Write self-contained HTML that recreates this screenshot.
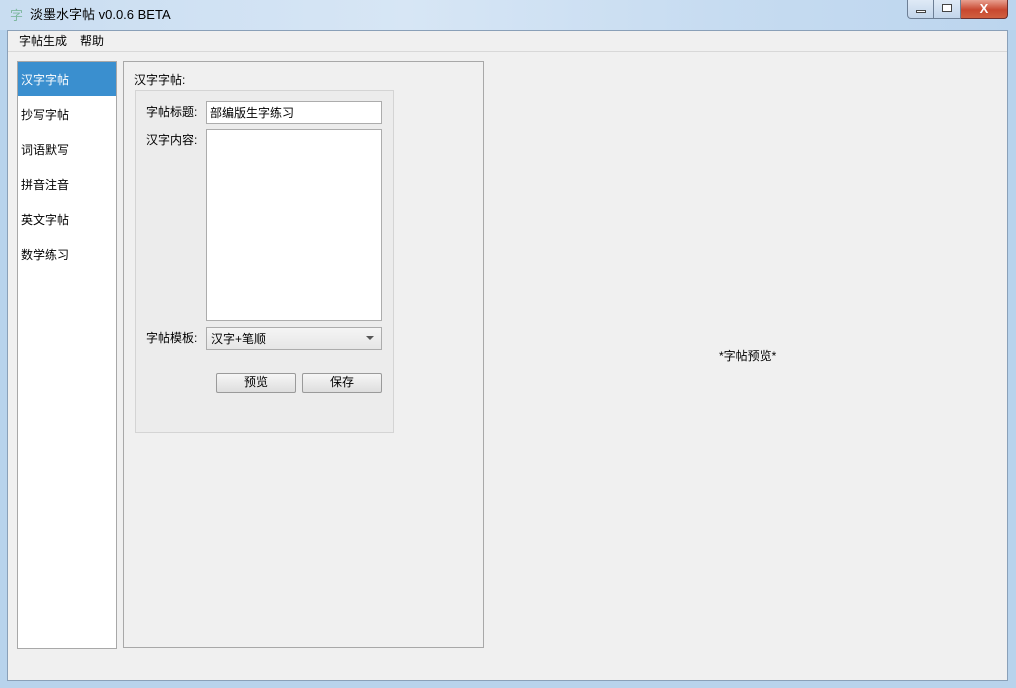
<!DOCTYPE html><html><head><meta charset="utf-8"><style>
body{margin:0;width:1016px;height:688px;overflow:hidden;font:12px "Liberation Sans","Noto Sans CJK SC",sans-serif;color:#000;background:#b8d3ec;position:relative}
.a{position:absolute;box-sizing:border-box}
</style></head><body>
<div class="a" style="left:0;top:0;width:1016px;height:30px;background:linear-gradient(90deg,#c9ddf1,#d7e6f5 40%,#c7dcf1 70%,#bcd5ee)"></div>
<div class="a" style="left:10px;top:5px;color:#7fb8a0;font-size:13px">字</div>
<div class="a" style="left:30px;top:4px;font-size:13px">淡墨水字帖 v0.0.6 BETA</div>
<div class="a" style="left:907px;top:0;width:27px;height:19px;border:1px solid #6d7f95;border-top:0;border-radius:0 0 0 4px;background:linear-gradient(#dfeaf6,#c2d5ea)"><div class="a" style="left:8px;top:10px;width:10px;height:3px;border:1px solid #444;background:#fff"></div></div>
<div class="a" style="left:934px;top:0;width:27px;height:19px;border:1px solid #6d7f95;border-top:0;border-left:0;background:linear-gradient(#dfeaf6,#c2d5ea)"><div class="a" style="left:8px;top:4px;width:10px;height:8px;border:1px solid #444;background:#fff"></div></div>
<div class="a" style="left:961px;top:0;width:47px;height:19px;border:1px solid #6d3030;border-top:0;border-left:0;border-radius:0 0 4px 0;background:linear-gradient(#e8a090,#c84830 55%,#d06040);color:#fff;font-weight:bold;text-align:center;font-size:13px;line-height:18px">X</div>
<div class="a" style="left:7px;top:30px;width:1001px;height:651px;background:#f0f0f0;border:1px solid #8aa0b8"></div>
<div class="a" style="left:8px;top:51px;width:999px;height:1px;background:#d8d8d8"></div>
<div class="a" style="left:19px;top:32px">字帖生成</div>
<div class="a" style="left:80px;top:32px">帮助</div>
<div class="a" style="left:17px;top:61px;width:100px;height:588px;background:#fff;border:1px solid #a8a8a8"></div>
<div class="a" style="left:18px;top:62px;width:98px;height:34px;background:#3a8fcf"></div>
<div class="a" style="left:21px;top:71px;color:#fff">汉字字帖</div>
<div class="a" style="left:21px;top:106px">抄写字帖</div>
<div class="a" style="left:21px;top:141px">词语默写</div>
<div class="a" style="left:21px;top:176px">拼音注音</div>
<div class="a" style="left:21px;top:211px">英文字帖</div>
<div class="a" style="left:21px;top:246px">数学练习</div>
<div class="a" style="left:123px;top:61px;width:361px;height:587px;border:1px solid #a8a8a8"></div>
<div class="a" style="left:134px;top:71px">汉字字帖:</div>
<div class="a" style="left:135px;top:90px;width:259px;height:343px;border:1px solid #d4d4d4;background:#ececec"></div>
<div class="a" style="left:146px;top:103px">字帖标题:</div>
<div class="a" style="left:206px;top:101px;width:176px;height:23px;background:#fff;border:1px solid #acacac;padding:2px 3px">部编版生字练习</div>
<div class="a" style="left:146px;top:131px">汉字内容:</div>
<div class="a" style="left:206px;top:129px;width:176px;height:192px;background:#fff;border:1px solid #acacac"></div>
<div class="a" style="left:146px;top:329px">字帖模板:</div>
<div class="a" style="left:206px;top:327px;width:176px;height:23px;background:linear-gradient(#f4f4f4,#e6e6e6);border:1px solid #acacac;padding:2px 4px">汉字+笔顺</div>
<div class="a" style="left:366px;top:336px;border:4px solid transparent;border-top:4px solid #555"></div>
<div class="a" style="left:216px;top:373px;width:80px;height:20px;background:linear-gradient(#f6f6f6,#dedede);border:1px solid #9a9a9a;border-radius:2px;text-align:center;line-height:17px">预览</div>
<div class="a" style="left:302px;top:373px;width:80px;height:20px;background:linear-gradient(#f6f6f6,#dedede);border:1px solid #9a9a9a;border-radius:2px;text-align:center;line-height:17px">保存</div>
<div class="a" style="left:719px;top:347px">*字帖预览*</div>
</body></html>
